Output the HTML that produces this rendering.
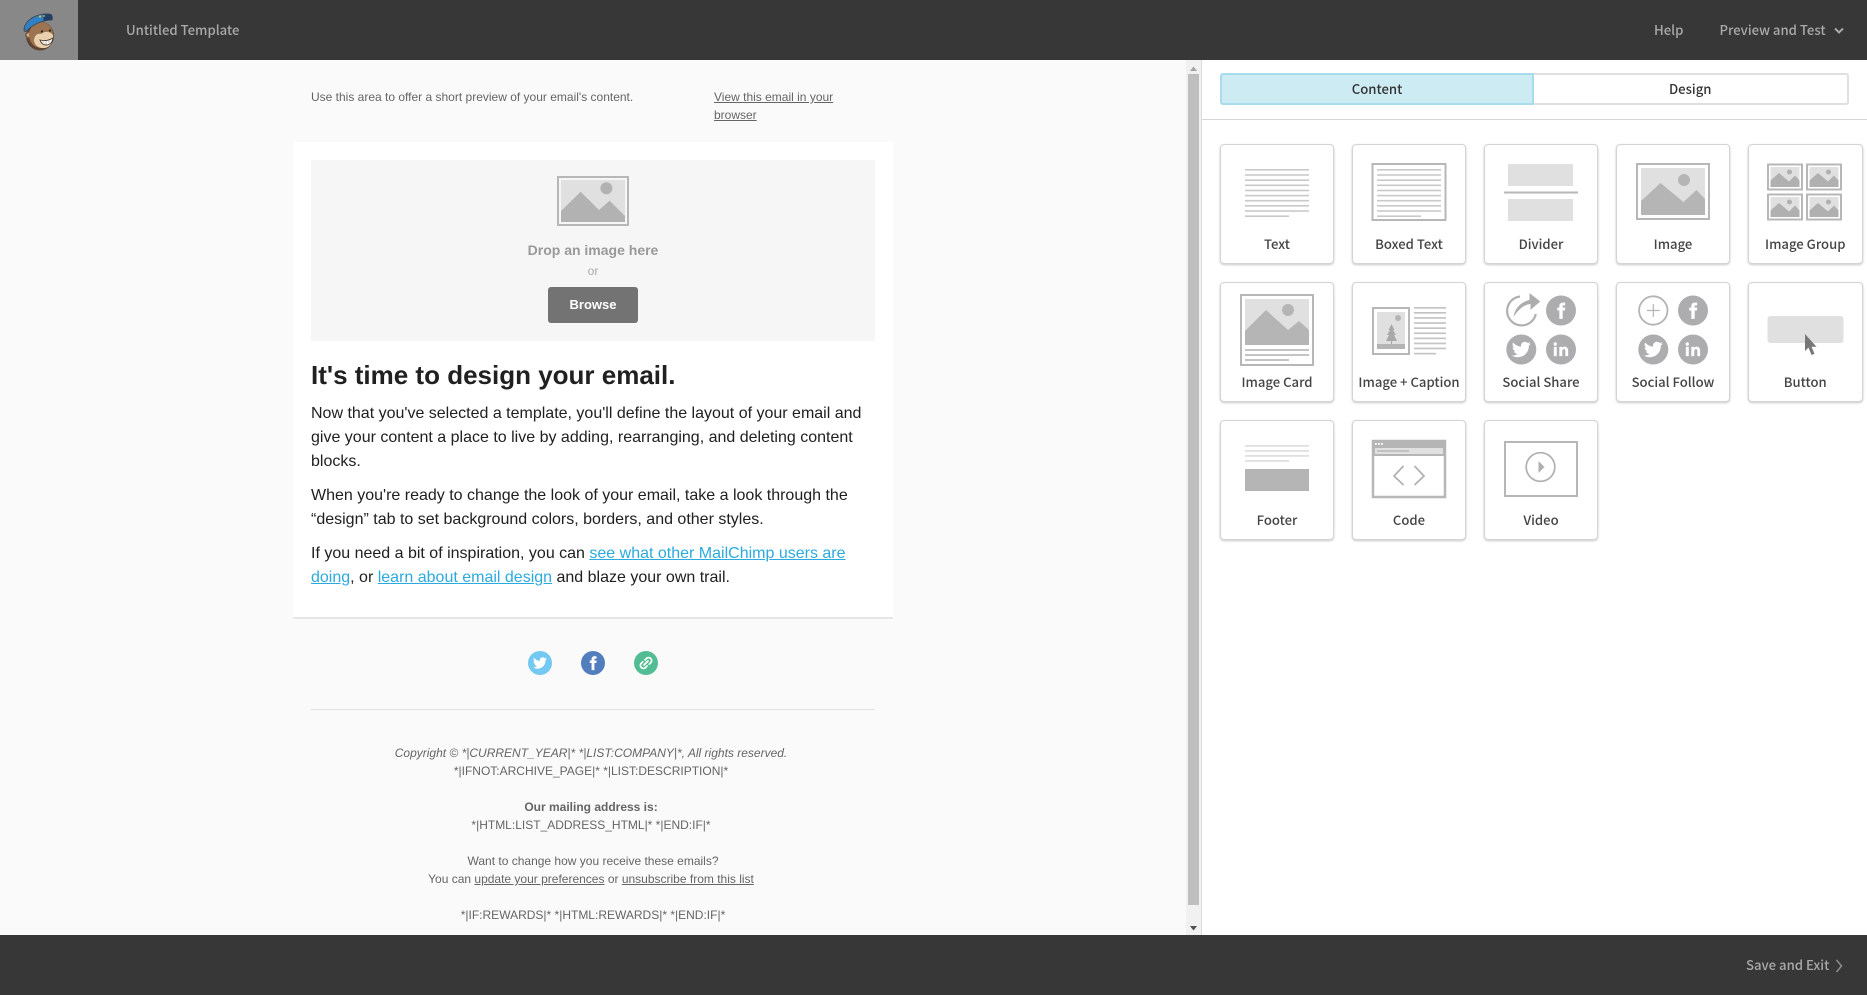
<!DOCTYPE html>
<html lang="en"><head><meta charset="utf-8"><title>Untitled Template</title>
<style>
html,body{margin:0;padding:0;width:1867px;height:995px;overflow:hidden;background:#fafafa;font-family:"Liberation Sans",sans-serif}
div,a,span{position:absolute;white-space:nowrap;box-sizing:border-box}
.o{font-family:"Noto Sans CJK JP","DejaVu Sans",sans-serif;font-weight:500}
.bar{left:0;width:1867px;background:#373737}
.hd{color:#a9a9a9;font-size:13.15px;line-height:20px}
.tab{top:73px;height:32px;text-align:center;font-size:13.15px;line-height:28px;color:#333;border:2px solid #e0e0e0}
.tile{width:114px;height:120px;background:#fff;border:1px solid #d4d4d4;border-radius:4px;box-shadow:0 1px 2px rgba(0,0,0,.22)}
.tile svg{left:-1px}
.tile span{left:0;right:0;top:88.5px;text-align:center;font-size:13.1px;line-height:20px;color:#444}
.p{left:311px;font-size:16px;line-height:24px;color:#202020}
.p a{position:static;color:#2baadf;text-decoration:underline}
.s{font-size:12px;line-height:18px;color:#656565}
.f{left:291px;width:600px;text-align:center;font-size:12px;line-height:18px;color:#656565}
.f u,.s u{position:static}
svg{position:absolute;left:0;top:0;overflow:visible}
</style></head><body>

<svg width="0" height="0" style="width:0;height:0">
<defs>
<symbol id="pic" viewBox="0 0 74 57" preserveAspectRatio="none" overflow="visible">
<rect x="1" y="1" width="72" height="55" fill="none" stroke="#b7b7b7" stroke-width="2"/>
<rect x="5" y="5" width="64" height="47" fill="#e0e0e0"/>
<path d="M5 38 24.500 20 47.500 39 60.500 27 69 36V52H5z" fill="#b5b5b5"/>
<circle cx="48" cy="17" r="6" fill="#b5b5b5"/>
</symbol>
<symbol id="pic2" viewBox="0 0 36 27" overflow="visible">
<rect x="1" y="1" width="34" height="25" fill="none" stroke="#b7b7b7" stroke-width="2"/>
<rect x="3.500" y="3.500" width="29" height="20" fill="#e0e0e0"/>
<path d="M3.500 17 12 9.500 22 18 28 12 32.500 17V23.500H3.500z" fill="#b0b0b0"/>
<circle cx="22.500" cy="8.500" r="2.500" fill="#b0b0b0"/>
</symbol>
<symbol id="tw" viewBox="0 0 24 24"><path d="M23.950 4.570a10 10 0 0 1-2.820.78 4.960 4.960 0 0 0 2.160-2.720c-.95.55-2 .95-3.120 1.180a4.920 4.920 0 0 0-8.380 4.480C7.690 8.100 4.070 6.130 1.640 3.160a4.820 4.820 0 0 0-.67 2.480c0 1.710.87 3.210 2.190 4.100a4.900 4.900 0 0 1-2.230-.62v.06a4.920 4.920 0 0 0 3.950 4.830 5 5 0 0 1-2.210.08 4.940 4.940 0 0 0 4.600 3.420A9.870 9.870 0 0 1 0 19.540a14 14 0 0 0 7.560 2.210c9.050 0 14-7.500 14-13.980 0-.21 0-.42-.02-.63A9.940 9.940 0 0 0 24 4.590z" fill="#fff"/></symbol>
<symbol id="fb" viewBox="0 0 24 24"><path d="M14 8.500V6.800c0-.8.500-1 1-1h2V2.500h-2.800C11.200 2.500 10 4.400 10 6.600v1.900H7.500V12H10v10h4V12h2.700l.4-3.500z" fill="#fff"/></symbol>
<symbol id="li" viewBox="0 0 24 24"><path d="M6.900 8.900H3.400V20h3.500zM5.100 3.500a2 2 0 1 0 0 4 2 2 0 0 0 0-4zM20.600 13.600c0-3-1.600-5-4.300-5-1.400 0-2.400.7-2.900 1.500V8.900H10V20h3.500v-5.900c0-1.500.6-2.500 2-2.500s1.700 1 1.700 2.500V20h3.400z" fill="#fff"/></symbol>
<g id="soc">
<circle cx="77" cy="27.500" r="15" fill="#adadb0"/><use href="#fb" x="67" y="17.500" width="20" height="20"/>
<circle cx="37.300" cy="66.500" r="15" fill="#adadb0"/><use href="#tw" x="27.800" y="57" width="19" height="19"/>
<circle cx="77" cy="66.500" r="15" fill="#adadb0"/><use href="#li" x="67" y="56.500" width="20" height="20"/>
</g>
<g id="lines" fill="#c9c9c9">
<rect x="25" y="24" width="64" height="1.600"/><rect x="25" y="29.200" width="64" height="1.600"/><rect x="25" y="34.400" width="64" height="1.600"/><rect x="25" y="39.500" width="64" height="1.600"/><rect x="25" y="44.700" width="64" height="1.600"/><rect x="25" y="49.800" width="64" height="1.600"/><rect x="25" y="54.900" width="64" height="1.600"/><rect x="25" y="60" width="64" height="1.600"/><rect x="25" y="65.200" width="64" height="1.600"/><rect x="25" y="70.400" width="44" height="1.600"/>
</g>
</defs>
</svg>

<!-- top bar -->
<div class="bar" style="top:0;height:60px"></div>
<div style="left:0;top:0;width:78px;height:60px;background:#888"></div>
<svg style="left:15px;top:8px" width="50" height="46" viewBox="0 0 50 46">
<ellipse cx="25" cy="28" rx="14" ry="14.500" fill="#5f4333"/>
<circle cx="13.500" cy="27" r="3.500" fill="#7a5a44"/><circle cx="13.500" cy="27" r="1.800" fill="#d2b08e"/>
<ellipse cx="26" cy="27" rx="12" ry="13" fill="#9c7452"/>
<path d="M19 33c0-5 3-8 7-7 3-3 9-3 12 1 1 5-2 12-8 13-6 .5-10-2-11-7z" fill="#e9d0ae"/>
<path d="M25 32c4 1 9 .5 13-2-.5 4-3 7-7 7-3 0-5-2-6-5z" fill="#fff" stroke="#4a3325" stroke-width=".9"/>
<path d="M28 33v3.500M31 33v4M34 32v3.500" stroke="#8b7565" stroke-width=".5"/>
<circle cx="27" cy="23.500" r="1.100" fill="#2c1f17"/><circle cx="35" cy="22.500" r="1.100" fill="#2c1f17"/>
<path d="M9 22C9 15 16 9 24 7c4-1 9-1.500 12-.5 1.500 1 1.500 4 1 5.500-9 0-19 4-26 11.500-1 0-2-.5-2-1.500z" fill="#2f80c4" stroke="#3b3f4a" stroke-width=".8"/>
<path d="M28 6.500l8-.2c1.500 1 1.500 4 1 5.700-3 0-6 .2-8.500 1z" fill="#1f3f66"/>
<circle cx="25" cy="8.500" r="1.100" fill="#e3c34a"/><circle cx="29" cy="8" r=".9" fill="#e3c34a"/>
</svg>
<div class="o hd" style="left:126px;top:20px">Untitled Template</div>
<div class="o hd" style="left:1654px;top:20px">Help</div>
<div class="o hd" style="left:1719.500px;top:20px">Preview and Test</div>
<svg style="left:1833px;top:26.500px" width="12" height="8" viewBox="0 0 12 8"><path d="M2 1.500 6 5.500 10 1.500" fill="none" stroke="#aaa" stroke-width="2"/></svg>

<!-- email preview -->
<div class="s" style="left:311px;top:88px">Use this area to offer a short preview of your email's content.</div>
<div class="s" style="left:714px;top:88px;text-decoration:underline;line-height:18px">View this email in your<br>browser</div>

<div style="left:293px;top:142px;width:600px;height:477px;background:#fff;border-bottom:2px solid #e6e6e6"></div>
<div style="left:311px;top:160px;width:564px;height:181px;background:#f6f6f6"></div>
<svg style="left:557px;top:176px" width="72" height="50"><rect x="1" y="1" width="70" height="48" fill="none" stroke="#b7b7b7" stroke-width="2"/><rect x="4" y="4" width="64" height="42" fill="#e0e0e0"/><path d="M4 35 23.700 15.700 42 34 52.600 24.700 68 40V46H4z" fill="#b2b2b2"/><circle cx="49.400" cy="12.300" r="6" fill="#b2b2b2"/></svg>
<div style="left:293px;width:600px;top:240px;text-align:center;font-size:14px;line-height:20px;font-weight:bold;color:#999">Drop an image here</div>
<div style="left:293px;width:600px;top:261px;text-align:center;font-size:12px;line-height:20px;color:#aaa">or</div>
<div style="left:548px;top:287px;width:90px;height:36px;background:#737373;border-radius:3px;color:#fff;font-weight:bold;font-size:13px;line-height:35px;text-align:center">Browse</div>

<div style="left:311px;top:358px;font-size:26px;line-height:34px;font-weight:bold;color:#202020">It's time to design your email.</div>
<div class="p" style="top:402px">Now that you've selected a template, you'll define the layout of your email and<br>give your content a place to live by adding, rearranging, and deleting content<br>blocks.</div>
<div class="p" style="top:484px">When you're ready to change the look of your email, take a look through the<br>“design” tab to set background colors, borders, and other styles.</div>
<div class="p" style="top:542px">If you need a bit of inspiration, you can <a>see what other MailChimp users are</a><br><a>doing</a>, or <a>learn about email design</a> and blaze your own trail.</div>

<svg style="left:0;top:0" width="1867" height="995">
<circle cx="540" cy="663" r="12" fill="#73c9f2"/><use href="#tw" x="533" y="656" width="14" height="14"/>
<circle cx="593" cy="663" r="12" fill="#527ebd"/><use href="#fb" x="584.500" y="654.500" width="17" height="17"/>
<circle cx="646" cy="663" r="12" fill="#52bd95"/>
<g fill="none" stroke="#fff" stroke-width="1.700" stroke-linecap="round"><path d="M644 665l4-4"/><path d="M645 660l1.800-1.800a3 3 0 0 1 4.200 4.200l-1.800 1.800"/><path d="M647 666l-1.800 1.800a3 3 0 0 1-4.200-4.200l1.800-1.800"/></g>
</svg>
<div style="left:311px;top:709px;width:564px;height:1px;background:#e2e2e2"></div>

<div class="f" style="top:744px"><i>Copyright © *|CURRENT_YEAR|* *|LIST:COMPANY|*, All rights reserved.</i></div>
<div class="f" style="top:762px">*|IFNOT:ARCHIVE_PAGE|* *|LIST:DESCRIPTION|*</div>
<div class="f" style="top:798px"><b>Our mailing address is:</b></div>
<div class="f" style="top:816px">*|HTML:LIST_ADDRESS_HTML|* *|END:IF|*</div>
<div class="f" style="top:852px;left:293px">Want to change how you receive these emails?</div>
<div class="f" style="top:870px">You can <u>update your preferences</u> or <u>unsubscribe from this list</u></div>
<div class="f" style="top:906px;left:293px">*|IF:REWARDS|* *|HTML:REWARDS|* *|END:IF|*</div>

<!-- scrollbar -->
<div style="left:1186px;top:60px;width:15px;height:875px;background:#f1f1f1"></div>
<div style="left:1188px;top:74px;width:11px;height:831px;background:#bfbfbf"></div>
<svg style="left:1186px;top:60px" width="15" height="875"><path d="M4 11 7.500 6.500 11 11z" fill="#a3a3a3"/><path d="M4 866 7.500 870.500 11 866z" fill="#505050"/></svg>

<!-- right panel -->
<div style="left:1201px;top:60px;width:666px;height:875px;background:#fff;border-left:1px solid #dcdcdc"></div>
<div class="o tab" style="left:1220px;width:314px;background:#cdebf3;border-color:#a8dcec;border-radius:3px 0 0 3px">Content</div>
<div class="o tab" style="left:1533.500px;width:315.500px;background:#fff;border-left:0;border-radius:0 3px 3px 0">Design</div>
<div style="left:1202px;top:119px;width:665px;height:1px;background:#d6d6d6"></div>

<!-- tiles row 1 -->
<div class="tile" style="left:1220px;top:144px"><svg width="114" height="90"><use href="#lines"/></svg><span class="o">Text</span></div>
<div class="tile" style="left:1352px;top:144px"><svg width="114" height="90"><rect x="20.500" y="19" width="73" height="56" fill="none" stroke="#b7b7b7" stroke-width="2"/><use href="#lines"/></svg><span class="o">Boxed Text</span></div>
<div class="tile" style="left:1484px;top:144px"><svg width="114" height="90"><rect x="24" y="19" width="65" height="22" fill="#e0e0e0"/><rect x="20" y="46.500" width="74" height="2" fill="#b7b7b7"/><rect x="24" y="54" width="65" height="22" fill="#e0e0e0"/></svg><span class="o">Divider</span></div>
<div class="tile" style="left:1616px;top:144px"><svg width="114" height="90"><use href="#pic" x="20" y="18" width="74" height="57"/></svg><span class="o">Image</span></div>
<div class="tile" style="left:1748px;top:144px;width:114.500px"><svg width="114" height="90"><use href="#pic2" x="19" y="18.500" width="36" height="27"/><use href="#pic2" x="58" y="18.500" width="36" height="27"/><use href="#pic2" x="19" y="48.500" width="36" height="27"/><use href="#pic2" x="58" y="48.500" width="36" height="27"/></svg><span class="o">Image Group</span></div>

<!-- tiles row 2 -->
<div class="tile" style="left:1220px;top:282px"><svg width="114" height="90"><rect x="21" y="12" width="72" height="70" fill="none" stroke="#b7b7b7" stroke-width="2"/><rect x="25" y="16" width="64" height="46" fill="#e0e0e0"/><path d="M25 48 46 27 68 47 79 38 89 47V62H25z" fill="#b5b5b5"/><circle cx="68" cy="27" r="6" fill="#b5b5b5"/><rect x="25" y="66" width="64" height="2" fill="#c4c4c4"/><rect x="25" y="71" width="64" height="2" fill="#c4c4c4"/><rect x="25" y="76" width="44" height="2" fill="#c4c4c4"/></svg><span class="o">Image Card</span></div>
<div class="tile" style="left:1352px;top:282px"><svg width="114" height="90">
<rect x="21" y="25" width="36" height="46" fill="none" stroke="#b7b7b7" stroke-width="2"/><rect x="25" y="29" width="28" height="37" fill="#e0e0e0"/><rect x="25" y="61" width="28" height="5" fill="#b5b5b5"/><circle cx="46" cy="35" r="3" fill="#b5b5b5"/><path d="M39.500 41l3 6h-1.500l3 5h-2l3 6h-5v3h-1v-3h-5l3-6h-2l3-5h-1.500z" fill="#a8a8a8"/>
<g fill="#c4c4c4"><rect x="62" y="24" width="32" height="1.700"/><rect x="62" y="29" width="32" height="1.700"/><rect x="62" y="34.100" width="32" height="1.700"/><rect x="62" y="39.200" width="32" height="1.700"/><rect x="62" y="44.300" width="32" height="1.700"/><rect x="62" y="49.400" width="32" height="1.700"/><rect x="62" y="54.500" width="32" height="1.700"/><rect x="62" y="59.600" width="32" height="1.700"/><rect x="62" y="64.600" width="32" height="1.700"/><rect x="62" y="69.800" width="22" height="1.700"/></g></svg><span class="o">Image + Caption</span></div>
<div class="tile" style="left:1484px;top:282px"><svg width="114" height="90"><use href="#soc"/>
<path d="M36 13.500A14.500 14.500 0 1 0 51.800 31" fill="none" stroke="#b0b0b0" stroke-width="2.200"/><path d="M29 36c0-10 7-17 16-19.500V9l12 9.500L46 28V21.500c-7 1-13 7-17 14.500z" fill="#adadb0" stroke="#fff" stroke-width="1"/></svg><span class="o">Social Share</span></div>
<div class="tile" style="left:1616px;top:282px"><svg width="114" height="90"><use href="#soc"/>
<circle cx="37.300" cy="27.500" r="14.200" fill="none" stroke="#b4b4b4" stroke-width="1.800"/><path d="M37.300 21v13M30.800 27.500h13" stroke="#b4b4b4" stroke-width="1.200"/></svg><span class="o">Social Follow</span></div>
<div class="tile" style="left:1748px;top:282px;width:114.500px"><svg width="114" height="90"><rect x="19.500" y="33" width="76" height="27" rx="3" fill="#e0e0e0"/><path d="M57 51l0 17 3.500-3.500 3 7.500 3-1.200-3-7h5z" fill="#777"/></svg><span class="o">Button</span></div>

<!-- tiles row 3 -->
<div class="tile" style="left:1220px;top:420px"><svg width="114" height="90"><g fill="#e0e0e0"><rect x="25" y="24" width="64" height="1.800"/><rect x="25" y="29" width="64" height="1.800"/><rect x="25" y="34" width="64" height="1.800"/><rect x="25" y="39" width="44" height="1.800"/></g><rect x="25" y="48" width="64" height="22" fill="#b5b5b5"/></svg><span class="o">Footer</span></div>
<div class="tile" style="left:1352px;top:420px"><svg width="114" height="90"><rect x="21" y="20" width="72" height="56" fill="none" stroke="#b7b7b7" stroke-width="2.500"/><path d="M20 21a2 2 0 0 1 2-2h70a2 2 0 0 1 2 2v14H20z" fill="#b5b5b5"/><rect x="23" y="27" width="68" height="6" fill="#e0e0e0"/><rect x="25" y="29.300" width="32" height="1.400" fill="#b5b5b5"/><g fill="#fff"><rect x="23" y="22" width="1.800" height="1.800"/><rect x="26" y="22" width="1.800" height="1.800"/><rect x="29" y="22" width="1.800" height="1.800"/></g><path d="M51.500 45 42 55 51.500 64M62.500 45 72 55 62.500 64" fill="none" stroke="#b0b0b0" stroke-width="1.700"/></svg><span class="o">Code</span></div>
<div class="tile" style="left:1484px;top:420px"><svg width="114" height="90"><rect x="21" y="21" width="72" height="54" fill="none" stroke="#b7b7b7" stroke-width="2"/><circle cx="56.500" cy="46" r="14.300" fill="none" stroke="#b0b0b0" stroke-width="1.700"/><path d="M54.500 40 60.500 46 54.500 52z" fill="#b0b0b0"/></svg><span class="o">Video</span></div>

<!-- bottom bar -->
<div class="bar" style="top:935px;height:60px"></div>
<div class="o hd" style="left:1746px;top:954.500px">Save and Exit</div>
<svg style="left:1834px;top:958px" width="10" height="16" viewBox="0 0 10 16"><path d="M2.500 2 7.500 8 2.500 14" fill="none" stroke="#8a8a8a" stroke-width="1.600"/></svg>
</body></html>
